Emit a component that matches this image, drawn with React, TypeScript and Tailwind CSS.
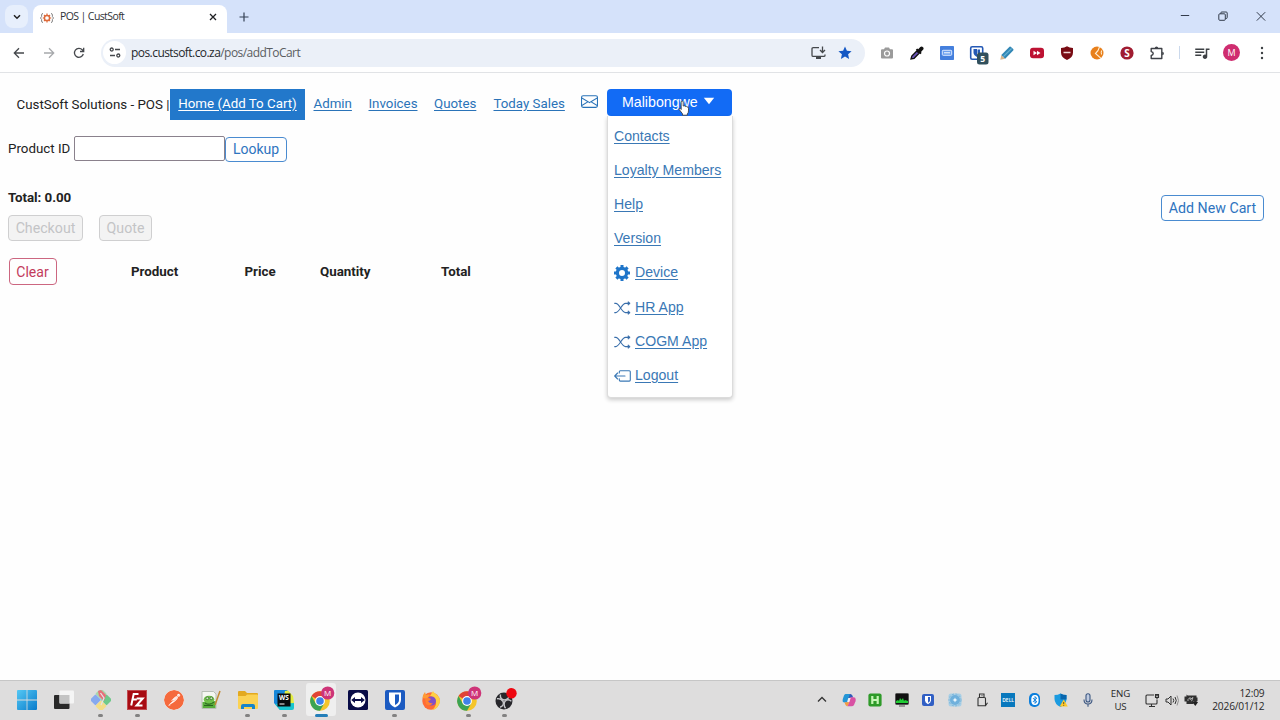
import React from 'react';
import { SiPostman } from 'react-icons/si';
import { BsEnvelope, BsBluetooth } from 'react-icons/bs';
import { MdOutlineQueueMusic } from 'react-icons/md';

const NAV_LINKS = [
  { label: 'Admin', width: 'w-[55px]' },
  { label: 'Invoices', width: 'w-[65.5px]' },
  { label: 'Quotes', width: 'w-[59.5px]' },
  { label: 'Today Sales', width: 'w-[87.5px]' },
];

const Gear = () => (
  <svg width="16" height="16" viewBox="0 0 16 16" fill="none" stroke="#1f75c9">
    <circle cx="8" cy="8" r="4.6" strokeWidth="3.2" />
    <path d="M8 0v3M8 13v3M0 8h3M13 8h3M2.4 2.4l2 2M11.6 11.6l2 2M2.4 13.6l2-2M11.6 4.4l2-2" strokeWidth="3" />
  </svg>
);

const Shuffle = () => (
  <svg width="17" height="16" viewBox="0 0 17 16" fill="none" stroke="#3a6fab" strokeWidth="1.1">
    <path d="M.3 3.4h1.500c3.700 0 5.900 9.200 9.700 9.200H16M.3 12.600h1.500c3.700 0 5.900-9.200 9.700-9.200H16" />
    <path d="M14 1.600l2.200 1.800L14 5.200zM14 10.800l2.200 1.800-2.200 1.800z" fill="#3a6fab" strokeWidth=".6" />
  </svg>
);

const LogoutIcon = () => (
  <svg width="17" height="16" viewBox="0 0 17 16" fill="none" stroke="#3a78b5" strokeWidth="1.1" strokeLinecap="round" strokeLinejoin="round">
    <path d="M5.300 5V3.700q0-1 1-1h9q1 0 1 1v8.400q0 1-1 1h-9q-1 0-1-1v-1.400M11 8H.8M3.600 5L.7 8l2.900 3" />
  </svg>
);

const MENU_ITEMS: { label: string; icon?: React.ReactNode }[] = [
  { label: 'Contacts' },
  { label: 'Loyalty Members' },
  { label: 'Help' },
  { label: 'Version' },
  { label: 'Device', icon: <Gear /> },
  { label: 'HR App', icon: <Shuffle /> },
  { label: 'COGM App', icon: <Shuffle /> },
  { label: 'Logout', icon: <LogoutIcon /> },
];

const EXTENSIONS: React.ReactNode[] = [
  <svg key="camera" width="14" height="14" viewBox="0 0 14 14">
    <path d="M4 3.200L5 1.500h4l1 1.700h2q1 0 1 1V11.500q0 1-1 1H2q-1 0-1-1V4.200q0-1 1-1z" fill="#9b9b9b" />
    <circle cx="7" cy="7.500" r="2.500" fill="none" stroke="#fff" strokeWidth="1.200" />
  </svg>,
  <svg key="picker" width="14" height="14" viewBox="0 0 14 14">
    <path d="M1 13l.8-3 5-5 2.300 2.300-5 5z" fill="#6a55b5" stroke="#111" strokeWidth="1.300" />
    <path d="M5.800 3.700l1.400-1.200 1 .7L10.300 1q1.500-1 2.700.2t0 2.600L11 6l.6 1-1.300 1.200z" fill="#111" />
  </svg>,
  <svg key="card" width="14" height="14" viewBox="0 0 14 14">
    <rect width="14" height="14" rx=".8" fill="#447fdd" />
    <rect x="2.300" y="4.300" width="9.400" height="5" rx=".8" fill="#6ca0ef" stroke="#dce9ff" />
    <path d="M4 6.800h6" stroke="#fff" />
  </svg>,
  <svg key="vault" width="20" height="20" viewBox="0 0 20 20">
    <rect x="1.700" y="1.700" width="12" height="12.600" rx="1.500" fill="#fff" stroke="#2459b5" strokeWidth="1.600" />
    <path d="M4.500 4H8v8q-3.500-1.800-3.500-4.500z" fill="#2459b5" />
    <path d="M8.500 4.500H11V8H8.500z" fill="#2459b5" />
    <rect x="8" y="7.500" width="11.500" height="12" rx="2.500" fill="#31505d" />
    <text x="13.700" y="16.700" textAnchor="middle" fontSize="8.500" fontWeight="700" fill="#fff" fontFamily="Open Sans, sans-serif">5</text>
  </svg>,
  <svg key="pencil" width="14" height="14" viewBox="0 0 14 14">
    <path d="M.3 13.700l1-4.800 3.900 3.900z" fill="#d9b48b" />
    <path d="M1.300 8.900L9.500.8q.8-.6 1.500.1l2.200 2.200q.7.700 0 1.500l-8 8.200z" fill="#3287b5" />
    <path d="M3.300 10.600L11.600 2.500" stroke="#68b0d2" strokeWidth="1.200" />
  </svg>,
  <svg key="skip" width="14" height="12" viewBox="0 0 14 12">
    <rect y=".8" width="14" height="10.400" rx="3" fill="#bd1233" />
    <path d="M3.500 3.700L7 6 3.500 8.300zM7 3.700L10.500 6 7 8.300z" fill="#fff" />
  </svg>,
  <svg key="shield" width="14" height="14" viewBox="0 0 14 14">
    <path d="M7 .3Q9.500 2 13 2v4.500Q13 11.500 7 14 1 11.500 1 6.500V2Q4.500 2 7 .3z" fill="#790c14" />
    <path d="M3.500 6.500h7" stroke="#f1d7d7" strokeWidth="1.500" />
  </svg>,
  <svg key="orange" width="14" height="14" viewBox="0 0 14 14">
    <circle cx="7" cy="7" r="6.500" fill="#e8801c" />
    <path d="M9.500.8Q8.500 5 5.500 7.500l5.500 4.800M11.800 4.500q-1.300 1.500-.2 4" fill="none" stroke="#fff0d8" strokeWidth="1.100" />
  </svg>,
  <svg key="s" width="14" height="14" viewBox="0 0 14 14">
    <circle cx="7" cy="7" r="6.600" fill="#a01c31" />
    <text x="7" y="10.500" textAnchor="middle" fontSize="10" fontWeight="700" fill="#fff" fontFamily="Open Sans, sans-serif">S</text>
  </svg>,
  <svg key="puzzle" width="16" height="16" viewBox="0 0 16 16">
    <path d="M2.200 3.500h10.600v10H2.200v-3q2-.4 2-2t-2-2z" fill="none" stroke="#3e4147" strokeWidth="1.400" strokeLinejoin="round" />
    <path d="M5.800 3.200a1.700 1.700 0 013.400 0zM13.200 6.800a1.700 1.700 0 010 3.400z" fill="#3e4147" />
  </svg>,
];

const ChromeLogo = () => (
  <svg width="28" height="28" viewBox="0 0 28 28">
    <circle cx="13" cy="15" r="9.800" fill="#f5c52a" />
    <path d="M13 15L4.500 10.100A9.800 9.800 0 0121.500 10.100H13z" fill="#e04336" />
    <path d="M4.500 10.100A9.800 9.800 0 0013 24.800l4.200-7.400-8.400.1z" fill="#3ba354" />
    <circle cx="13" cy="15" r="4.900" fill="#fff" />
    <circle cx="13" cy="15" r="3.800" fill="#3e82ea" />
    <circle cx="20.700" cy="7" r="6.600" fill="#ce3478" />
    <text x="20.700" y="10" textAnchor="middle" fontSize="8" fill="#fff" fontFamily="Open Sans, sans-serif">M</text>
  </svg>
);

const TASKS: { name: string; icon: React.ReactNode; running?: boolean; active?: boolean }[] = [
  {
    name: 'start',
    icon: (
      <svg width="20" height="20" viewBox="0 0 20 20">
        <defs>
          <linearGradient id="win" x1="0" y1="0" x2="1" y2="1">
            <stop stopColor="#55c8f4" />
            <stop offset="1" stopColor="#087bcb" />
          </linearGradient>
        </defs>
        <path d="M0 1q0-1 1-1h8.600v9.600H0zM10.400 0H19q1 0 1 1v8.600h-9.600zM0 10.400h9.600V20H1q-1 0-1-1zM10.400 10.400H20V19q0 1-1 1h-8.600z" fill="url(#win)" />
      </svg>
    ),
  },
  {
    name: 'taskview',
    icon: (
      <svg width="20" height="20" viewBox="0 0 20 20">
        <rect y="5" width="15.500" height="14" rx="1" fill="#292929" />
        <rect x="5.500" y=".5" width="14.500" height="13" rx="1" fill="#f5f5f5" />
        <path d="M5.500 5h10v8.500h-10z" fill="#c4c4c4" />
      </svg>
    ),
  },
  {
    name: 'git',
    running: true,
    icon: (
      <svg width="20" height="20" viewBox="0 0 20 20">
        <rect x="6" y="-.2" width="8" height="8" rx="1" transform="rotate(45 10 3.800)" fill="#a7d8aa" />
        <rect x="11.500" y="5.900" width="8" height="8" rx="1" transform="rotate(45 15.500 9.900)" fill="#6fc98a" />
        <rect x=".5" y="5.900" width="8" height="8" rx="1" transform="rotate(45 4.500 9.900)" fill="#86a9ef" />
        <rect x="6" y="12" width="8" height="8" rx="1" transform="rotate(45 10 16)" fill="#f3dd88" />
        <path d="M7 1l3-1 5 5-2 6-5-5z" fill="#e7707a" />
        <path d="M9.500 3l3.500 5-3 7" fill="none" stroke="#e3e3e6" strokeWidth="1.300" />
      </svg>
    ),
  },
  {
    name: 'filezilla',
    running: true,
    icon: (
      <svg width="20" height="20" viewBox="0 0 20 20" fill="none">
        <rect width="20" height="20" fill="#a80b12" />
        <rect x=".5" y=".5" width="19" height="19" stroke="#d98a8d" strokeDasharray="1 1" />
        <path d="M11.500 4H6.700L4.200 15.500M5.600 9.500h4.200M9.700 8.500h6L9.500 15.500h6" stroke="#fff" strokeWidth="2" />
      </svg>
    ),
  },
  { name: 'postman', icon: <SiPostman size={20} className="rounded-full bg-white text-[#f56a3d]" /> },
  {
    name: 'notepad',
    icon: (
      <svg width="20" height="20" viewBox="0 0 20 20">
        <path d="M1 1.500h11.500L15 4v14.500H1z" fill="#f5f7f1" stroke="#b8beb5" />
        <path d="M1.500 12l13-1v7h-13z" fill="#57ad3c" />
        <ellipse cx="8" cy="9.500" rx="5.300" ry="3.800" fill="#70c24a" />
        <circle cx="6.300" cy="8.300" r="1.400" fill="#cfe8bd" stroke="#356f2c" strokeWidth=".8" />
        <circle cx="10.300" cy="8.300" r="1.400" fill="#cfe8bd" stroke="#356f2c" strokeWidth=".8" />
        <path d="M4 13q4 3 9-1M3 15.500h9" stroke="#29651d" fill="none" />
        <path d="M19 1l-5 14" stroke="#c18a34" strokeWidth="1.500" />
      </svg>
    ),
  },
  {
    name: 'explorer',
    running: true,
    icon: (
      <svg width="20" height="20" viewBox="0 0 20 20">
        <path d="M0 2q0-1 1-1h6l2 2h10q1 0 1 1v5H0z" fill="#e3a91f" />
        <path d="M0 6h7.500L9 4.500h10q1 0 1 1V18q0 1-1 1H1q-1 0-1-1z" fill="#fbd253" />
        <path d="M3 19v-3q0-2 2-2h10q2 0 2 2v3h-3v-2H6v2z" fill="#1785ca" />
      </svg>
    ),
  },
  {
    name: 'webstorm',
    running: true,
    icon: (
      <svg width="20" height="20" viewBox="0 0 20 20">
        <path d="M0 1q0-1 1-1h12l4 5v13l-5 2H6l-6-7z" fill="#1687d9" />
        <path d="M11 1l3-.5 5 5.500 1 7-4 6-9 1z" fill="#e3ee40" />
        <path d="M1 14l5 6h12q2 0 2-2v-5z" fill="#18c5cf" />
        <rect x="3.500" y="3.500" width="13" height="13" fill="#080b0d" />
        <text x="10" y="10.200" textAnchor="middle" fontSize="6.500" fontWeight="700" fill="#fff" fontFamily="Open Sans, sans-serif">WS</text>
        <path d="M5.500 14h5" stroke="#fff" />
      </svg>
    ),
  },
  { name: 'chrome', running: true, active: true, icon: <ChromeLogo /> },
  {
    name: 'teamviewer',
    icon: (
      <svg width="20" height="20" viewBox="0 0 20 20">
        <rect width="20" height="20" rx="1.500" fill="#090c47" />
        <circle cx="10" cy="10" r="7.500" fill="#fff" />
        <path d="M3.200 10L7 7v2h6V7l3.800 3-3.800 3v-2H7v2z" fill="#090c47" />
      </svg>
    ),
  },
  {
    name: 'bitwarden',
    running: true,
    icon: (
      <svg width="20" height="20" viewBox="0 0 20 20">
        <rect width="20" height="20" rx="2" fill="#1c5bc1" />
        <path d="M4 2.500h12v7.500q0 4.500-6 7.500-6-3-6-7.500z" fill="#fff" />
        <path d="M10 4.500h4V10q0 3-4 5z" fill="#1c5bc1" />
      </svg>
    ),
  },
  {
    name: 'firefox',
    icon: (
      <svg width="20" height="20" viewBox="0 0 20 20">
        <circle cx="10" cy="11" r="8.700" fill="#ff6b35" />
        <path d="M12 1q1 2 3 3 4 3 4 8-2 7-8 8 6-5 3-10-2-4-5-4z" fill="#ffd044" />
        <path d="M1.500 8Q2 4 4 2l1 3q3-1 4 0-2 2-3 4z" fill="#ff9a35" />
        <circle cx="10.500" cy="11" r="4.500" fill="#8150c8" />
        <path d="M4 9q3-2 6 0-1 2-3 2 2 3 5 2-3 4-7 1z" fill="#ff8132" />
      </svg>
    ),
  },
  { name: 'chrome2', running: true, icon: <ChromeLogo /> },
  {
    name: 'obs',
    running: true,
    icon: (
      <svg width="28" height="28" viewBox="0 0 28 28" fill="none">
        <circle cx="13" cy="15" r="8.500" fill="#27272b" />
        <g stroke="#c6c6ca" strokeWidth="1.400">
          <path d="M9.500 8.500q-.8 4.500 3.500 5.500 4-.3 5.500-4" />
          <path d="M9.500 8.500q-.8 4.500 3.500 5.500 4-.3 5.500-4" transform="rotate(120 13 15)" />
          <path d="M9.500 8.500q-.8 4.500 3.500 5.500 4-.3 5.500-4" transform="rotate(240 13 15)" />
        </g>
        <circle cx="20.500" cy="7.300" r="5.200" fill="#ee0710" />
      </svg>
    ),
  },
];

const TRAY: React.ReactNode[] = [
  <svg key="up" width="12" height="12" viewBox="0 0 12 12"><path d="M2 7.500l4-4 4 4" fill="none" stroke="#333" strokeWidth="1.300" /></svg>,
  <svg key="copilot" width="14" height="14" viewBox="0 0 14 14">
    <path d="M3.500 1h5L6 9.500H2.500Q0 9.500.8 6L2 2.500Q2.500 1 3.500 1z" fill="#2496d6" />
    <path d="M8 1q2.500 0 3 3.500L6.500 5z" fill="#315ab9" />
    <path d="M8.500 4.300h3q3 0 2 4L12 12q-.7 1.200-2.500 1.200H5.500z" fill="#d851a3" />
    <path d="M2.500 9.300H7.500l-2 4q-2 0-3-4z" fill="#f39c45" />
    <path d="M6.300 5h2.300L7.400 9H5.100z" fill="#f4eef2" />
  </svg>,
  <svg key="h" width="14" height="14" viewBox="0 0 14 14">
    <rect x=".4" y=".4" width="13.200" height="13.200" rx="2" fill="#2e9a29" />
    <path d="M4.300 3v8M9.700 3v8M4 7h6" stroke="#c6f5b5" strokeWidth="2.200" />
  </svg>,
  <svg key="monitor" width="14" height="14" viewBox="0 0 14 14">
    <rect x=".5" y=".5" width="13" height="11" rx="1" fill="#111" stroke="#555" />
    <path d="M1 10V8l2-1 1 1 1-3 1.500 2 1.500-2 1 3 1-1 3 1v2z" fill="#21cc35" />
    <path d="M4 13h6" stroke="#555" />
  </svg>,
  <svg key="bw" width="12" height="12" viewBox="0 0 12 12">
    <rect width="12" height="12" rx="2" fill="#315fc4" />
    <path d="M3 2h6v4.500q0 2-3 3.700-3-1.700-3-3.700z" fill="#fff" />
    <path d="M6 3h2v3.500q0 1.300-2 2.300z" fill="#315fc4" />
  </svg>,
  <svg key="snow" width="14" height="14" viewBox="0 0 14 14">
    <rect x=".5" y=".5" width="13" height="13" rx="2.500" fill="#a8cfe6" />
    <circle cx="7" cy="7" r="5" fill="#6fb0dc" />
    <path d="M7 4.500l.8 1.700 1.700.8-1.700.8L7 9.500l-.8-1.700L4.500 7l1.700-.8z" fill="#f1faff" />
    <circle cx="7" cy="7" r="6" fill="none" stroke="#7bb6dc" strokeDasharray="2 1.500" />
  </svg>,
  <svg key="usb" width="12" height="14" viewBox="0 0 12 14" fill="none" stroke="#333" strokeWidth="1.100">
    <path d="M3.500 4.500V1h4.500v3.500M2 12.800V5.500q0-1 1-1h5.500q1 0 1 1v7.300zM9.500 12.800l2-3M5 2.700h.5M6.300 2.700h.5" />
  </svg>,
  <span key="dell" className="flex h-[14px] w-[14px] items-center justify-center bg-[#0878bd] text-[5px] font-semibold leading-none text-white">DELL</span>,
  <span key="bt" className="flex h-[14px] w-[11px] items-center justify-center rounded-[5px] bg-[#0b7edc] text-white"><BsBluetooth size={10} /></span>,
  <svg key="defender" width="14" height="14" viewBox="0 0 14 14">
    <path d="M6.500.5Q9 2 12.500 2v4q0 5-6 8Q.5 11 .5 6V2q3.500 0 6-1.500z" fill="#1c9be0" />
    <path d="M6.500.5Q9 2 12.500 2v4.500h-6z" fill="#0866ae" />
    <path d="M9.700 6.500L13.800 13.500H5.700z" fill="#ffc928" />
    <path d="M9.700 9v2.200M9.700 12v.8" stroke="#333" strokeWidth=".8" />
  </svg>,
  <svg key="mic" width="12" height="14" viewBox="0 0 12 14" fill="none" stroke="#3b5680" strokeWidth="1.100">
    <rect x="4" y=".7" width="4" height="8.300" rx="2" fill="#c0cbe0" />
    <path d="M2 6.500Q2 11 6 11t4-4.500M6 11v2.700" />
  </svg>,
];

const TabStrip = () => (
  <div className="flex h-[33px] shrink-0 items-start bg-[#d5e2fa]">
    <div className="ml-[5px] mt-[5px] flex h-[23px] w-[23px] items-center justify-center rounded-[8px] bg-[#e7effc]">
      <svg width="8" height="6" viewBox="0 0 8 6"><path d="M1 1.200l3 3 3-3" fill="none" stroke="#222" strokeWidth="1.500" /></svg>
    </div>
    <div className="ml-[5px] mt-[5px] flex h-[28px] w-[194px] items-center rounded-t-[8px] bg-white pl-[7px] pr-[10px]">
      <svg width="14" height="12" viewBox="0 0 14 12" fill="none" className="mb-[3px]">
        <circle cx="7" cy="6" r="2.600" stroke="#dd6a3a" strokeWidth="1.500" />
        <path d="M7 1.500v2M7 8.500v2M2.700 6h1.500M9.800 6h1.500M4 3l1 1M9 8l1 1M4 9l1-1M9 4l1-1" stroke="#dd6a3a" strokeWidth="1.200" />
        <path d="M3 1.500q-1.400 0-1.400 1.500v1.500L.5 6l1.100 1.500V9q0 1.500 1.400 1.500M11 1.500q1.400 0 1.400 1.500v1.500L13.500 6l-1.100 1.500V9q0 1.500-1.400 1.500" stroke="#777" strokeWidth=".9" />
      </svg>
      <span className="ml-[6px] flex-1 whitespace-nowrap pb-[5px] pt-px text-[10.500px] tracking-[-0.600px] text-[#303236]">POS | CustSoft</span>
      <svg width="8" height="8" viewBox="0 0 8 8" className="mb-[5px]"><path d="M1 1l6 6M7 1L1 7" stroke="#202124" strokeWidth="1.300" /></svg>
    </div>
    <svg width="10" height="10" viewBox="0 0 10 10" className="ml-[12px] mt-[12px]"><path d="M5 .5v9M.5 5h9" stroke="#344054" strokeWidth="1.200" /></svg>
    <div className="ml-auto mr-[14px] mt-[11px] flex gap-[28px]">
      <svg width="10" height="11" viewBox="0 0 10 11"><path d="M.8 4.500h8.400" stroke="#333c4b" /></svg>
      <svg width="10" height="11" viewBox="0 0 10 11" fill="none" stroke="#333c4b"><rect x=".8" y="2.800" width="6.500" height="6.500" rx="1" /><path d="M2.800 2.800V2q0-1 1-1h4.400q1 0 1 1v4.500q0 1-1 1h-.7" /></svg>
      <svg width="10" height="11" viewBox="0 0 10 11"><path d="M.8 1.200L9.200 9.600M9.200 1.200L.8 9.600" stroke="#333c4b" /></svg>
    </div>
  </div>
);

const Toolbar = () => (
  <div className="flex h-[40px] shrink-0 items-center border-b border-[#e1e3e6] bg-white">
    <div className="flex w-[101px] items-center gap-[18px] pl-[12.500px]">
      <svg width="12" height="12" viewBox="0 0 12 12" fill="none" stroke="#45484c" strokeWidth="1.300"><path d="M11 6H1.500M6 1.300L1.300 6 6 10.700" /></svg>
      <svg width="12" height="12" viewBox="0 0 12 12" fill="none" stroke="#a7a9ac" strokeWidth="1.300"><path d="M1 6h9.500M6 1.300L10.700 6 6 10.700" /></svg>
      <svg width="12" height="12" viewBox="0 0 12 12" fill="none" stroke="#45484c" strokeWidth="1.300"><path d="M10.300 7A4.500 4.500 0 119.300 2.800L10.700 4.200M10.700 .8v3.700H7" /></svg>
    </div>
    <div className="flex h-[28px] w-[764px] items-center rounded-full bg-[#ebf0f8] pl-[2px] pr-[13px]">
      <div className="flex h-[23px] w-[23px] items-center justify-center rounded-full bg-white">
        <svg width="12" height="11" viewBox="0 0 12 11" fill="none" stroke="#45484c" strokeWidth="1.300"><circle cx="2.700" cy="2.500" r="1.500" /><path d="M6 2.500h5M1 8.500h5" /><circle cx="9.300" cy="8.500" r="1.500" /></svg>
      </div>
      <span className="ml-[5px] flex-1 whitespace-nowrap pt-px text-[12px] tracking-[-0.560px] text-[#5a5d61]"><span className="text-[#25282c]">pos.custsoft.co.za</span>/pos/addToCart</span>
      <svg width="15" height="14" viewBox="0 0 15 14" fill="none" stroke="#45484c" strokeWidth="1.300" className="mr-[12px]">
        <path d="M8 1.700H2.200Q1 1.700 1 2.900v6.300q0 1.200 1.200 1.200h10.600q1.200 0 1.200-1.200V8.500M11.500.5v5.700M9 4l2.500 2.500L14 4" />
        <path d="M5 12h5" strokeWidth="2" />
      </svg>
      <svg width="14" height="14" viewBox="0 0 14 14"><path d="M7 .5l1.900 4.200 4.700.5-3.500 3.100 1 4.700L7 10.600l-4.100 2.400 1-4.700L.4 5.200l4.700-.5z" fill="#1558c4" /></svg>
    </div>
    <div className="ml-[7px] flex">
      {EXTENSIONS.map((icon, i) => (
        <div key={i} className={`flex h-[24px] w-[30px] items-center justify-center ${i === 3 ? 'pl-1 pt-1' : ''}`}>{icon}</div>
      ))}
    </div>
    <div className="ml-[7px] h-[13px] w-px bg-[#cbd9ec]" />
    <MdOutlineQueueMusic size={18} className="ml-[13px] text-[#3d4044]" />
    <div className="ml-[12px] flex h-[17px] w-[17px] items-center justify-center rounded-full bg-[#cf2d70] text-[9px] text-white">M</div>
    <svg width="4" height="14" viewBox="0 0 4 14" className="ml-[20px]" fill="#3d4044"><circle cx="2" cy="2" r="1.200" /><circle cx="2" cy="7" r="1.200" /><circle cx="2" cy="12" r="1.200" /></svg>
  </div>
);

const UserMenu = () => (
  <div className="relative ml-[9px]">
    <button className="flex h-[26.500px] w-[124.500px] items-center rounded-[4px] bg-[#126bf5] pl-[15px] font-['Liberation_Sans',sans-serif] text-[14.200px] text-white">
      Malibongwe
      <svg width="12" height="8" viewBox="0 0 12 8" className="mb-[3px] ml-[5px]"><path d="M.8.800h10.400L6 7.200z" fill="#fff" /></svg>
    </button>
    <div className="absolute left-0 top-[26.500px] h-[282.500px] w-[126px] rounded-b-[4px] border border-t-0 border-[#dcdcdc] bg-white pl-[6px] pt-[3px] font-['Liberation_Sans',sans-serif] text-[14.100px] text-[#3a78b5] shadow-[0_2px_4px_rgba(0,0,0,0.2)]">
      {MENU_ITEMS.map((item) => (
        <a key={item.label} className="flex h-[34.200px] items-center whitespace-nowrap">
          {item.icon && <span className="mr-[4px] mt-[2px] flex w-[17px]">{item.icon}</span>}
          <span className="underline underline-offset-[2px]">{item.label}</span>
        </a>
      ))}
    </div>
    {/* Pointer resting on the button */}
    <svg width="12" height="16" viewBox="0 0 12 16" className="absolute left-[71px] top-[11px]">
      <path d="M3.200 9.500V2.200q0-1.200 1-1.200t1 1.200V6q1.500-.6 2 .4 1.400-.5 1.700.5 1.600-.3 1.600 1.300v2.700q0 2-1.200 3v1.300H4.500v-1.400L1.200 9.500q-.4-1.500.9-1.200z" fill="#fff" stroke="#333" strokeWidth=".8" />
    </svg>
  </div>
);

const Page = () => (
  <main className="flex-1 overflow-hidden bg-[#fefefe] font-[Roboto,sans-serif] text-[13.330px] leading-[18px] text-[#222]">
    <nav className="flex h-[47px] items-start pl-[16.500px] pt-[16px]">
      <span className="w-[153.500px] whitespace-nowrap pt-[7px]">CustSoft Solutions - POS |</span>
      <a className="flex h-[31px] w-[135px] justify-center whitespace-nowrap bg-[#2278cb] pt-[6px] text-white underline underline-offset-[2px]">Home (Add To Cart)</a>
      <div className="ml-[8.500px] flex pt-[6px]">
        {NAV_LINKS.map((link) => (
          <a key={link.label} className={`${link.width} whitespace-nowrap text-[13.300px] text-[#2a73b8] underline underline-offset-[2px]`}>{link.label}</a>
        ))}
      </div>
      <BsEnvelope size={17} className="mt-[4px] text-[#2a73b8]" />
      <UserMenu />
    </nav>

    <div className="flex h-[44px] pl-[8px] pt-[16px]">
      <label className="w-[65.500px] whitespace-nowrap pt-[3.500px]">Product ID</label>
      <input className="h-[24.500px] w-[151.500px] rounded-[2px] border border-[#8a818c] bg-white" />
      <button className="mt-[.5px] h-[25.500px] w-[62px] rounded-[4px] border border-[#4a8bd0] text-[14px] text-[#2e74be]">Lookup</button>
    </div>

    <div className="flex justify-between pl-[8px] pr-[16px]">
      <div className="pt-[25px]">
        <div className="font-bold tracking-[-0.050px]">Total: 0.00</div>
        <div className="mt-[8px] flex gap-[16px] text-[14.200px] text-[#c3c4c6]">
          <button className="h-[26px] w-[75px] rounded-[4px] border border-[#cfcfd0] bg-[#f3f3f3]">Checkout</button>
          <button className="h-[26px] w-[53px] rounded-[4px] border border-[#cfcfd0] bg-[#f3f3f3]">Quote</button>
        </div>
      </div>
      <button className="mt-[31px] h-[26px] w-[103px] rounded-[4px] border border-[#4a8bd0] text-[14.200px] text-[#2e74be]">Add New Cart</button>
    </div>

    <div className="mt-[17px] flex h-[27px] items-center pl-[8.500px] font-bold">
      <div className="w-[122.500px] font-normal">
        <button className="h-[27px] w-[48px] rounded-[4px] border border-[#cc6680] text-[14px] text-[#c23a5b]">Clear</button>
      </div>
      <div className="w-[113.500px] pt-px">Product</div>
      <div className="w-[75.500px] pt-px">Price</div>
      <div className="w-[121px] pt-px">Quantity</div>
      <div className="pt-px">Total</div>
    </div>
  </main>
);

const Taskbar = () => (
  <div className="flex h-[40px] shrink-0 items-center border-t border-[#c6c6c6] bg-[#dedddd]">
    <div className="flex w-[800px] pl-[8.700px]">
      {TASKS.map((task) => (
        <div key={task.name} className="flex h-[39px] w-[36.750px] flex-col items-center pt-[2px]">
          <div className={`flex h-[33px] w-[30px] items-center justify-center rounded-[3px] ${task.active ? 'bg-[#efefef]' : ''}`}>{task.icon}</div>
          {task.running && (
            <span className={`-mt-[2px] h-[2.500px] shrink-0 rounded-full ${task.active ? 'w-[13px] bg-[#247eb9]' : 'w-[5px] bg-[#828282]'}`} />
          )}
        </div>
      ))}
    </div>
    <div className="flex w-[301.500px] pb-px pl-[8.700px]">
      {TRAY.map((icon, i) => (
        <div key={i} className="flex w-[26.600px] shrink-0 items-center justify-center">{icon}</div>
      ))}
    </div>
    <div className="w-[38px] pb-[2px] text-center text-[9.700px] leading-[13px] tracking-[-0.150px] text-[#292929]">
      <div>ENG</div>
      <div>US</div>
    </div>
    <div className="ml-[5px] flex items-center gap-[5px] pb-px">
      <svg width="15" height="15" viewBox="0 0 15 15" fill="none" stroke="#303030" strokeWidth="1.100"><path d="M9 2H2Q1 2 1 3v7q0 1 1 1h9q1 0 1-1V7M4 13.500h6M6.500 11v2.500M12 6.500V4.700M10.500 1.500v3h3v-3zM10.500 2.800h3" /></svg>
      <svg width="14" height="13" viewBox="0 0 14 13" fill="none" stroke="#303030"><path d="M1 5h2l3-3v9L3 8H1zM8 4.500q1.500 2 0 4M10 3q2.500 3.500 0 7" /><path d="M12 1.500q3 5 0 10" stroke="#909090" /></svg>
      <svg width="15" height="14" viewBox="0 0 15 14"><path d="M.5 3.500h2V1.500l1.200 1h8.800v2h1V8H9.500v3H2.500V8.500h-2z" fill="#303030" /><path d="M4 8V6.500l2-2v2l3-2-1.500 3.700" stroke="#d0d0d0" fill="none" strokeWidth=".8" /><path d="M8.500 9.300q2.500-2.500 5.500 0L11.300 13z" fill="#202020" /></svg>
    </div>
    <div className="ml-auto mr-[15.500px] whitespace-nowrap pb-[2px] text-right text-[10.200px] leading-[13px] tracking-[-0.180px] text-[#292929]">
      <div>12:09</div>
      <div>2026/01/12</div>
    </div>
  </div>
);

export default function App() {
  return (
    <div className="flex h-[720px] w-[1280px] flex-col overflow-hidden font-['Open_Sans',sans-serif]">
      <TabStrip />
      <Toolbar />
      <Page />
      <Taskbar />
    </div>
  );
}
